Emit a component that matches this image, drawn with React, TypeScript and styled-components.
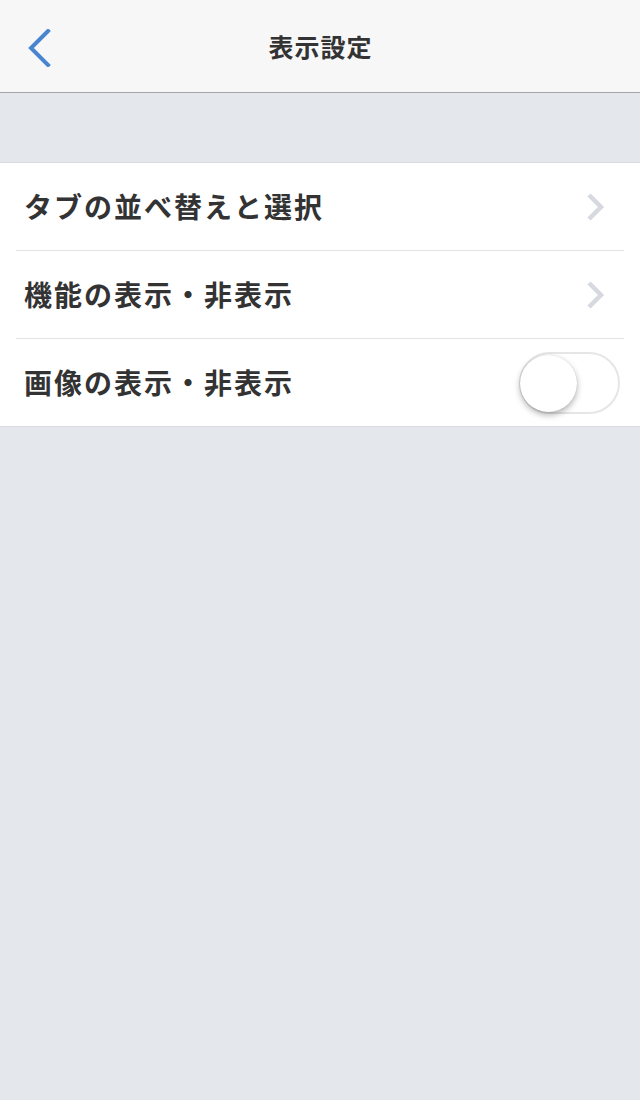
import styled, { createGlobalStyle } from "styled-components";

const GlobalStyle = createGlobalStyle`
  html, body {
    margin: 0;
    padding: 0;
    background: #e4e8ed;
  }
  body {
    font-family: "Noto Sans CJK JP", "Noto Sans", sans-serif;
    color: #333333;
  }
`;

const rows = [
  { id: 1, label: "タブの並べ替えと選択", kind: "link" },
  { id: 2, label: "機能の表示・非表示", kind: "link" },
  { id: 3, label: "画像の表示・非表示", kind: "toggle" },
];

const App = () => {
  return (
    <Page>
      <GlobalStyle />
      <Header>
        <BackButton aria-label="戻る">
          <svg width="24" height="38" viewBox="0 0 24 38">
            <path
              d="M20 2 L3 19 L20 36"
              fill="none"
              stroke="#4a86d0"
              strokeWidth="4"
              strokeLinecap="square"
            />
          </svg>
        </BackButton>
        <Title>表示設定</Title>
      </Header>
      <Spacer />
      <List>
        {rows.map((row) => (
          <Row key={row.id}>
            <Label>{row.label}</Label>
            {row.kind === "link" ? (
              <Chevron width="20" height="30" viewBox="0 0 20 30">
                <path
                  d="M3 3 L15 15 L3 27"
                  fill="none"
                  stroke="#d6d9df"
                  strokeWidth="4.5"
                />
              </Chevron>
            ) : (
              <Switch>
                <Knob />
              </Switch>
            )}
          </Row>
        ))}
      </List>
    </Page>
  );
};

export default App;

const Page = styled.div`
  min-height: 1100px;
  background: #e4e8ed;
`;
const Header = styled.header`
  height: 92px;
  background: #f7f7f8;
  border-bottom: 1px solid #a3a5a8;
  display: flex;
  align-items: center;
  justify-content: center;
  position: relative;
`;
const BackButton = styled.div`
  position: absolute;
  left: 28px;
  top: 29px;
  display: flex;
`;
const Title = styled.div`
  font-size: 25px;
  font-weight: 700;
  color: #333333;
  letter-spacing: 1px;
  line-height: 1;
  margin-left: 1px;
`;
const Spacer = styled.div`
  height: 69px;
  border-bottom: 1px solid #d7dbe0;
`;
const List = styled.div`
  background: #ffffff;
  border-bottom: 1px solid #d7dbe0;
  padding-left: 16px;
  padding-right: 16px;
`;
const Row = styled.div`
  height: 87px;
  display: flex;
  align-items: center;
  justify-content: space-between;
  padding-left: 8px;
  & + & {
    border-top: 1px solid #e3e3e6;
  }
`;
const Label = styled.div`
  font-size: 28px;
  font-weight: 700;
  color: #333333;
  letter-spacing: 2px;
  line-height: 1;
  margin-top: -2px;
`;
const Chevron = styled.svg`
  margin-right: 18px;
`;
const Switch = styled.div`
  width: 97px;
  height: 58px;
  border: 2px solid #e6e6e6;
  border-radius: 31px;
  position: relative;
  margin-right: 4px;
  background: #ffffff;
`;
const Knob = styled.div`
  position: absolute;
  left: -1px;
  top: 1px;
  width: 57px;
  height: 57px;
  border-radius: 50%;
  background: #ffffff;
  box-shadow: 0 3px 6px rgba(0, 0, 0, 0.3), 0 0 1px rgba(0, 0, 0, 0.2);
`;
